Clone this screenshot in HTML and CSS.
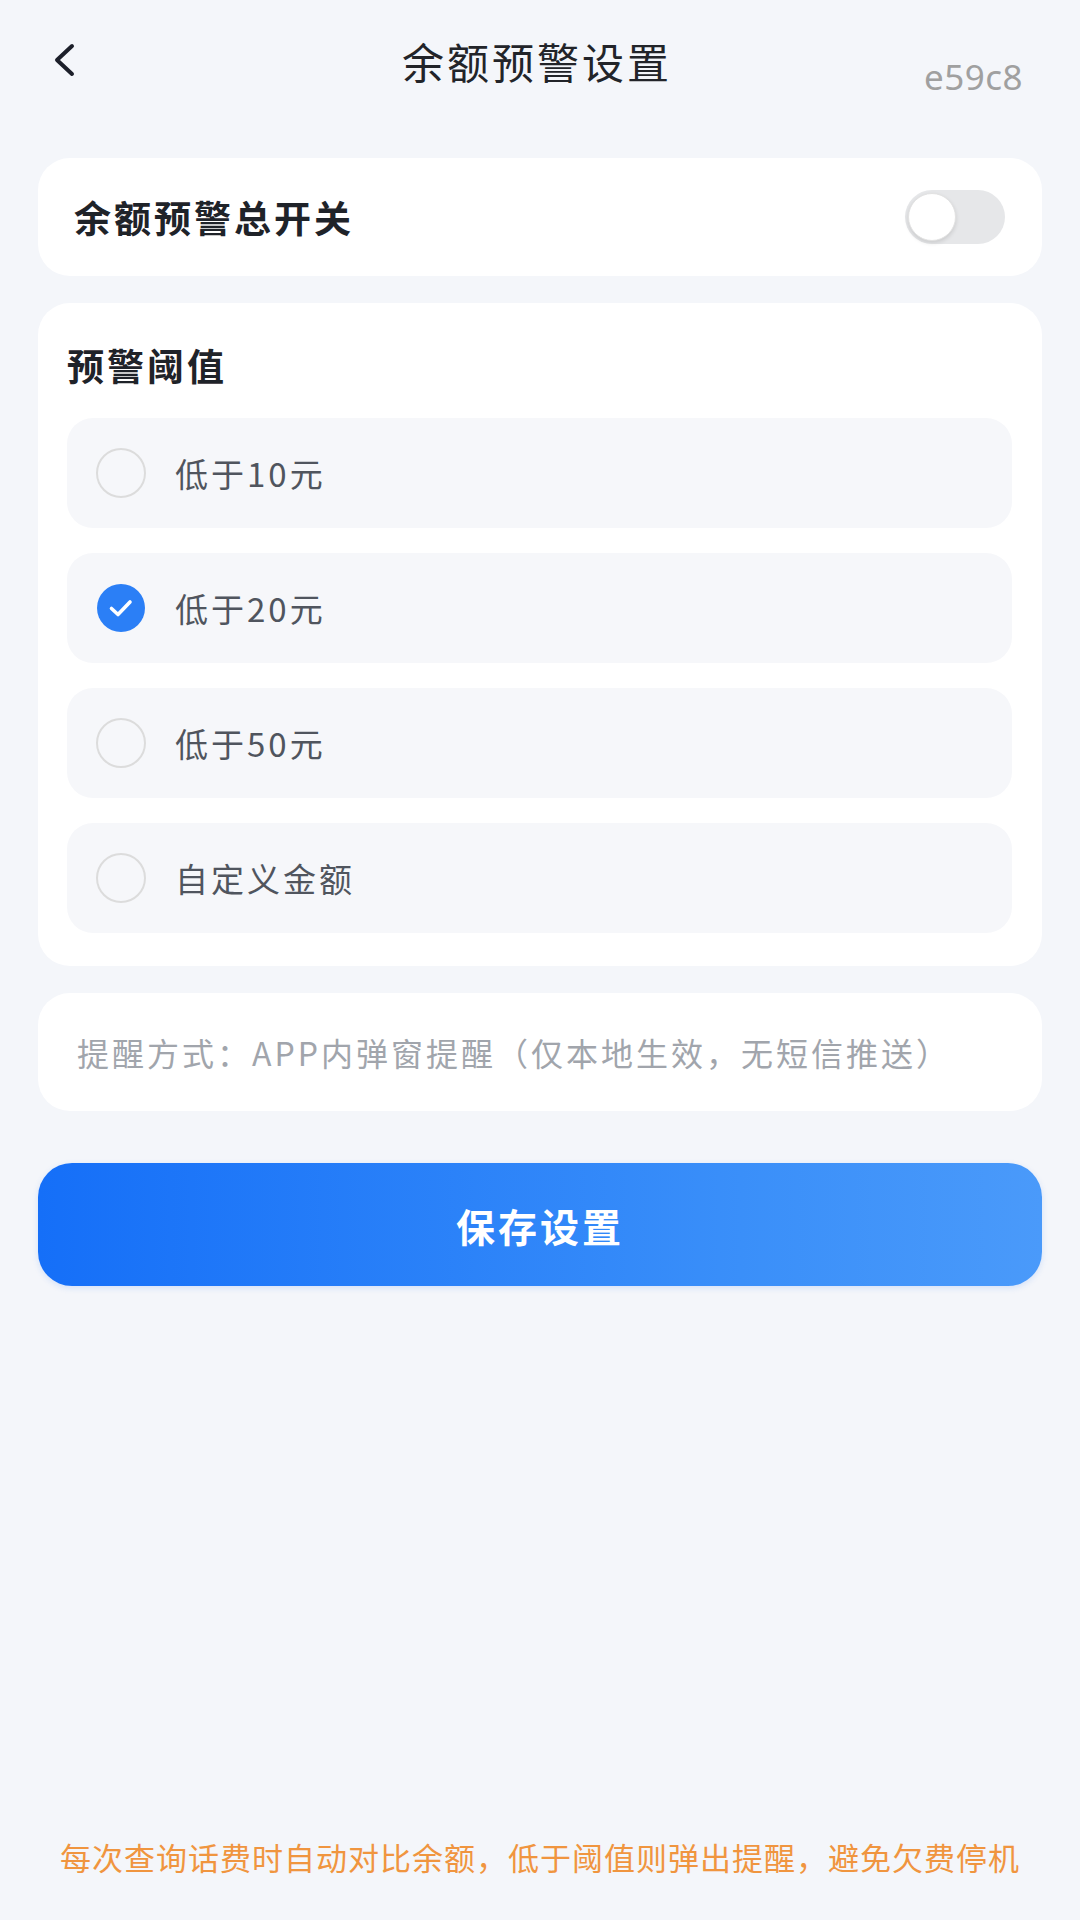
FILE: index.html
```html
<!DOCTYPE html>
<html lang="zh-CN">
<head>
  <meta charset="UTF-8">
  <meta name="viewport" content="width=device-width, initial-scale=1.0">
  <title>余额预警设置</title>
  <link rel="stylesheet" href="styles.css">
</head>
<body>
  <div class="page">
    <header class="nav">
      <button class="back" aria-label="返回">
        <svg width="24" height="34" viewBox="0 0 24 34">
          <polyline points="20,3 5,17 20,31" fill="none" stroke="#1c1f2a" stroke-width="4" stroke-linecap="round" stroke-linejoin="round"/>
        </svg>
      </button>
      <h1 class="nav-title">余额预警设置</h1>
      <span class="nav-tag">e59c8</span>
    </header>

    <main class="content">
      <section class="card switch-card">
        <span class="switch-label">余额预警总开关</span>
        <div class="toggle"><div class="knob"></div></div>
      </section>

      <section class="card threshold-card">
        <h2 class="section-title">预警阈值</h2>
        <div class="options">
          <div class="option">
            <span class="radio"></span>
            <span class="option-text">低于10元</span>
          </div>
          <div class="option">
            <svg class="radio-on" width="50" height="50" viewBox="0 0 50 50">
              <circle cx="25" cy="25" r="24" fill="#2b7ff6"/>
              <polyline points="15.5,25.5 22,31.5 34,19" fill="none" stroke="#fff" stroke-width="3.6" stroke-linecap="round" stroke-linejoin="round"/>
            </svg>
            <span class="option-text">低于20元</span>
          </div>
          <div class="option">
            <span class="radio"></span>
            <span class="option-text">低于50元</span>
          </div>
          <div class="option">
            <span class="radio"></span>
            <span class="option-text">自定义金额</span>
          </div>
        </div>
      </section>

      <section class="card info-card">
        <p class="info-text">提醒方式：APP内弹窗提醒（仅本地生效，无短信推送）</p>
      </section>

      <button class="save-btn">保存设置</button>
    </main>

    <footer class="tip">
      <p>每次查询话费时自动对比余额，低于阈值则弹出提醒，避免欠费停机</p>
    </footer>
  </div>
</body>
</html>
```

FILE: styles.css
```css
body {
  margin: 0;
  padding: 0;
  background: #f4f6fa;
  font-family: "Noto Sans CJK SC", "Noto Sans", sans-serif;
  color: #1f2329;
}
.page {
  width: 1080px;
  height: 1920px;
  display: flex;
  flex-direction: column;
}
.nav {
  height: 122px;
  display: grid;
  grid-template-columns: 1fr auto 1fr;
  align-items: center;
  padding: 0 58px 0 52px;
}
.back {
  justify-self: start;
  border: none;
  background: none;
  padding: 0;
  display: flex;
  margin-top: -2px;
}
.nav-title {
  margin: 0;
  font-size: 42px;
  font-weight: 400;
  letter-spacing: 3px;
  color: #222429;
  line-height: 56px;
}
.nav-tag {
  justify-self: end;
  font-family: "Noto Sans", "Liberation Sans", sans-serif;
  font-size: 35px;
  letter-spacing: 0.5px;
  color: #a0a0a0;
  margin-top: 30px;
  margin-right: -1px;
}

.content {
  padding: 36px 38px 0;
  display: flex;
  flex-direction: column;
  gap: 27px;
}
.card {
  background: #fff;
  border-radius: 32px;
}
.switch-card {
  height: 118px;
  display: flex;
  align-items: center;
  justify-content: space-between;
  padding: 0 37px 0 36px;
}
.switch-label {
  font-size: 37px;
  font-weight: 700;
  letter-spacing: 3px;
  color: #1f2329;
}
.toggle {
  width: 100px;
  height: 54px;
  border-radius: 27px;
  background: #e6e7e9;
  display: flex;
  align-items: center;
  padding: 0 3px;
  box-sizing: border-box;
}
.knob {
  width: 48px;
  height: 48px;
  border-radius: 50%;
  background: #fff;
  border: 1px solid #e2e2e2;
  box-sizing: border-box;
  box-shadow: 0 2px 4px rgba(0, 0, 0, 0.12);
}

.threshold-card {
  padding: 36px 30px 33px 29px;
}
.section-title {
  margin: 0 0 27px;
  font-size: 37px;
  font-weight: 700;
  letter-spacing: 3px;
  line-height: 52px;
  color: #1f2329;
}
.options {
  display: flex;
  flex-direction: column;
  gap: 25px;
}
.option {
  height: 110px;
  background: #f6f7fa;
  border-radius: 26px;
  display: flex;
  align-items: center;
  padding: 0 29px;
  gap: 29px;
}
.radio {
  width: 50px;
  height: 50px;
  border-radius: 50%;
  border: 2.5px solid #dcdcdc;
  box-sizing: border-box;
  flex-shrink: 0;
}
.radio-on {
  flex-shrink: 0;
}
.option-text {
  font-size: 33px;
  letter-spacing: 3px;
  color: #50555e;
}

.info-card {
  height: 118px;
  display: flex;
  align-items: center;
  padding: 0 30px 0 39px;
}
.info-text {
  margin: 0;
  font-size: 32px;
  letter-spacing: 3px;
  color: #a1a5ac;
}

.save-btn {
  margin-top: 25px;
  height: 123px;
  border: none;
  border-radius: 34px;
  background: linear-gradient(90deg, #156ff8, #3a8ff9 70%, #4a9afa);
  color: #fff;
  font-family: "Noto Sans CJK SC", sans-serif;
  font-size: 39px;
  font-weight: 700;
  letter-spacing: 3px;
  box-shadow: 0 2px 6px rgba(30, 110, 240, 0.15);
}

.tip {
  margin-top: auto;
  padding-bottom: 39px;
  text-align: center;
}
.tip p {
  margin: 0;
  font-size: 31px;
  letter-spacing: 1px;
  line-height: 48px;
  color: #f0953f;
}
```
